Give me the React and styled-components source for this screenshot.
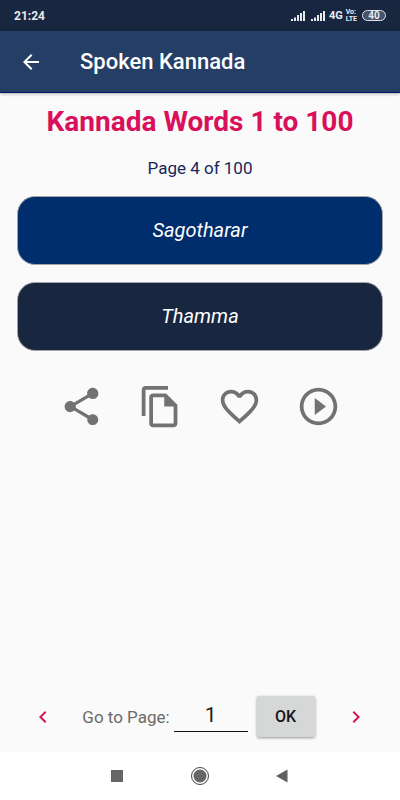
import React, { useState } from "react";
import styled, { createGlobalStyle } from "styled-components";

const GlobalStyle = createGlobalStyle`
  * {
    box-sizing: border-box;
  }
  body {
    margin: 0;
    background-color: #fafafa;
    font-family: Roboto, "Liberation Sans", sans-serif;
  }
  button {
    font-family: inherit;
    border: none;
    padding: 0;
    background: none;
    cursor: pointer;
  }
  svg {
    display: block;
  }
`;
const Screen = styled.div`
  display: flex;
  flex-direction: column;
  min-height: 100vh;
`;
const StatusBar = styled.div`
  display: flex;
  align-items: center;
  justify-content: space-between;
  height: 31px;
  padding: 0 14px;
  background-color: #18273f;
  color: #e8eaee;
  font-size: 12px;
  font-weight: 700;
`;
const StatusIcons = styled.div`
  display: flex;
  align-items: center;
  gap: 5px;
`;
const Network = styled.span`
  display: flex;
  align-items: center;
  gap: 3px;
  font-size: 11px;
`;
const Volte = styled.span`
  display: flex;
  flex-direction: column;
  font-size: 7px;
  line-height: 7px;
`;
const Battery = styled.span`
  width: 24px;
  height: 11px;
  border: 1px solid #dfe2e8;
  border-radius: 6px;
  background-color: #47536a;
  font-size: 10px;
  line-height: 9px;
  text-align: center;
`;
const AppBar = styled.header`
  display: flex;
  align-items: center;
  gap: 37px;
  height: 62px;
  margin-bottom: 1px;
  padding: 0 19px;
  background-color: #253e66;
  border-bottom: 1px solid #001460;
  box-shadow: 0 1px 3px rgba(0, 0, 0, 0.3);
  color: white;
`;
const Title = styled.h1`
  margin: 0;
  font-size: 22px;
  font-weight: 500;
`;
const Main = styled.main`
  flex: 1;
  display: flex;
  flex-direction: column;
  padding-top: 11px;
`;
const Heading = styled.h2`
  margin: 0;
  color: #d9105b;
  font-size: 28px;
  line-height: 34px;
  font-weight: 700;
  text-align: center;
`;
const PageCount = styled.p`
  margin: 18px 0 17px;
  color: #18275a;
  font-size: 17px;
  line-height: 22px;
  text-align: center;
`;
const Cards = styled.div`
  display: flex;
  flex-direction: column;
  gap: 17px;
  padding: 0 17px;
`;
const Card = styled.div`
  padding: 20px 16px;
  border: 1px solid #a2a4a8;
  border-radius: 18px;
  background-color: ${(props) => props.$color};
  color: white;
  font-size: 20px;
  line-height: 27px;
  font-style: italic;
  text-align: center;
`;
const Actions = styled.div`
  display: grid;
  grid-template-columns: repeat(4, 1fr);
  justify-items: center;
  padding: 33px 42px;
`;
const IconButton = styled.button`
  color: ${(props) => props.$color};
`;
const Pager = styled.form`
  display: flex;
  align-items: center;
  justify-content: space-between;
  margin-top: auto;
  padding: 0 32px 15px 31px;
`;
const GoTo = styled.div`
  display: flex;
  align-items: center;
`;
const Label = styled.label`
  color: #6b6b6b;
  font-size: 17px;
`;
const PageInput = styled.input`
  width: 74px;
  height: 31px;
  margin: 0 9px 0 4px;
  padding: 0 0 2px;
  border: none;
  border-bottom: 1px solid #111111;
  border-radius: 0;
  outline: none;
  background: none;
  color: #1c1c1c;
  font-family: inherit;
  font-size: 21px;
  text-align: center;
`;
const OkButton = styled.button`
  width: 58px;
  height: 41px;
  margin-right: 2px;
  border-radius: 2px;
  background-color: #d6d7d7;
  box-shadow: 0 1px 3px rgba(0, 0, 0, 0.4);
  color: #151515;
  font-size: 16px;
  font-weight: 500;
`;
const NavBar = styled.nav`
  display: flex;
  align-items: center;
  justify-content: center;
  gap: 61px;
  height: 48px;
  background-color: white;
`;

const icons = {
  back: "M20 11H7.83l5.59-5.59L12 4l-8 8 8 8 1.41-1.41L7.83 13H20v-2z",
  share:
    "M18 16.08c-.76 0-1.44.3-1.96.77L8.91 12.7c.05-.23.09-.46.09-.7s-.04-.47-.09-.7l7.05-4.11c.54.5 1.25.81 2.04.81 1.66 0 3-1.34 3-3s-1.34-3-3-3-3 1.34-3 3c0 .24.04.47.09.7L8.04 9.81C7.5 9.31 6.79 9 6 9c-1.66 0-3 1.34-3 3s1.34 3 3 3c.79 0 1.5-.31 2.04-.81l7.12 4.16c-.05.21-.08.43-.08.65 0 1.61 1.31 2.92 2.92 2.92s2.92-1.31 2.92-2.92-1.31-2.92-2.92-2.92z",
  copy: "M16 1H4c-1.1 0-2 .9-2 2v14h2V3h12V1zm-1 4H8c-1.1 0-1.99.9-1.99 2L6 21c0 1.1.89 2 1.99 2H19c1.1 0 2-.9 2-2V11l-6-6zM8 21V7h6v5h5v9H8z",
  heart:
    "M16.5 3c-1.74 0-3.41.81-4.5 2.09C10.91 3.81 9.24 3 7.5 3 4.42 3 2 5.42 2 8.5c0 3.78 3.4 6.86 8.55 11.54L12 21.35l1.45-1.32C18.6 15.36 22 12.28 22 8.5 22 5.42 19.58 3 16.5 3zm-4.4 15.55l-.1.1-.1-.1C7.14 14.24 4 11.39 4 8.5 4 6.5 5.5 5 7.5 5c1.54 0 3.04.99 3.57 2.36h1.87C13.46 5.99 14.96 5 16.5 5c2 0 3.5 1.5 3.5 3.5 0 2.89-3.14 5.74-7.9 10.05z",
  play: "M10 16.5l6-4.5-6-4.5v9zM12 2C6.48 2 2 6.48 2 12s4.48 10 10 10 10-4.48 10-10S17.52 2 12 2zm0 18c-4.41 0-8-3.59-8-8s3.59-8 8-8 8 3.59 8 8-3.59 8-8 8z",
  left: "M15.41 7.41L14 6l-6 6 6 6 1.41-1.41L10.83 12z",
  right: "M10 6L8.59 7.41 13.17 12l-4.58 4.59L10 18l6-6z",
};

const actions = [
  { name: "share", label: "Share" },
  { name: "copy", label: "Copy" },
  { name: "heart", label: "Favourite" },
  { name: "play", label: "Play" },
];

function Icon({ name, size = 24 }) {
  return (
    <svg width={size} height={size} viewBox="0 0 24 24" fill="currentColor" aria-hidden="true">
      <path d={icons[name]} />
    </svg>
  );
}

function Signal() {
  return (
    <svg width="15" height="11" viewBox="0 0 15 11" fill="#e8eaee" aria-hidden="true">
      <path d="M0 9h2v2H0zM3 7.500h2V11H3zM6 5h2v6H6zM9 3h2v8H9zM12 1h2v10h-2z" />
    </svg>
  );
}

function App() {
  const [page, setPage] = useState("1");

  return (
    <Screen>
      <GlobalStyle />
      <StatusBar>
        <span>21:24</span>
        <StatusIcons>
          <Signal />
          <Network>
            <Signal />
            4G
            <Volte>
              <span>Vo:</span>
              <span>LTE</span>
            </Volte>
          </Network>
          <Battery>40</Battery>
        </StatusIcons>
      </StatusBar>
      <AppBar>
        <IconButton type="button" $color="white" aria-label="Back">
          <Icon name="back" />
        </IconButton>
        <Title>Spoken Kannada</Title>
      </AppBar>
      <Main>
        <Heading>Kannada Words 1 to 100</Heading>
        <PageCount>Page 4 of 100</PageCount>
        <Cards>
          <Card $color="#002d6b">Sagotharar</Card>
          <Card $color="#18273f">Thamma</Card>
        </Cards>
        <Actions>
          {actions.map((a) => (
            <IconButton key={a.name} type="button" $color="#727272" aria-label={a.label}>
              <Icon name={a.name} size={45} />
            </IconButton>
          ))}
        </Actions>
        <Pager onSubmit={(e) => e.preventDefault()}>
          <IconButton type="button" $color="#d9105b" aria-label="Previous page">
            <Icon name="left" />
          </IconButton>
          <GoTo>
            <Label htmlFor="page">Go to Page:</Label>
            <PageInput
              id="page"
              type="text"
              inputMode="numeric"
              value={page}
              onChange={(e) => setPage(e.target.value)}
            />
            <OkButton type="submit">OK</OkButton>
          </GoTo>
          <IconButton type="button" $color="#d9105b" aria-label="Next page">
            <Icon name="right" />
          </IconButton>
        </Pager>
      </Main>
      <NavBar>
        <button type="button" aria-label="Recent apps">
          <svg width="22" height="22" viewBox="0 0 22 22">
            <path d="M5 5h12v12H5z" fill="#666666" />
          </svg>
        </button>
        <button type="button" aria-label="Home">
          <svg width="22" height="22" viewBox="0 0 22 22">
            <circle cx="11" cy="11" r="8.5" fill="none" stroke="#444444" />
            <circle cx="11" cy="11" r="6.5" fill="#666666" />
          </svg>
        </button>
        <button type="button" aria-label="Go back">
          <svg width="22" height="22" viewBox="0 0 22 22">
            <path d="M4 11L15.5 4.5v13z" fill="#606060" />
          </svg>
        </button>
      </NavBar>
    </Screen>
  );
}

export default App;
